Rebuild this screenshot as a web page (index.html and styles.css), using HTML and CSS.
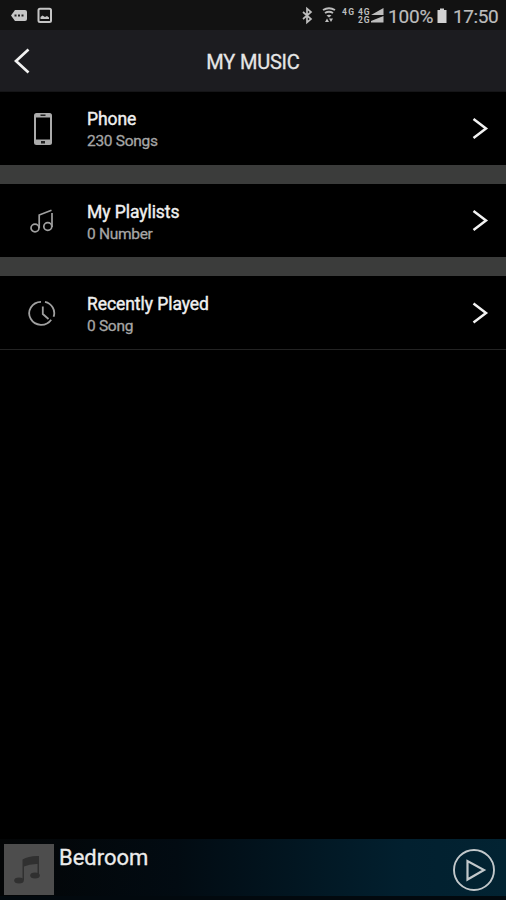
FILE: index.html
```html
<!DOCTYPE html>
<html lang="en">
<head>
<meta charset="utf-8">
<title>My Music</title>
<link rel="stylesheet" href="styles.css">
</head>
<body>
<div class="screen">
  <div class="status">
    <svg class="status-left" width="60" height="30" viewBox="0 0 60 30">
      <path d="M15 10h10q2 0 2 2v7q0 2-2 2H15l-4-5.500z" fill="#c6c6c6"/>
      <path d="M14.500 14.500h2v2h-2zM18 14.500h2v2h-2zM21.500 14.500h2v2h-2z" fill="#222"/>
      <rect x="38.500" y="8.800" width="12.500" height="13.200" rx="1.500" fill="none" stroke="#c6c6c6" stroke-width="2"/>
      <path d="M40.500 19v-2l2-1.500 2.500 1.500 2-1 2 1.500V19z" fill="#c6c6c6"/>
    </svg>
    <div class="status-right">
      <svg class="radios" width="84" height="30" viewBox="0 0 84 30">
        <path d="M3 12l8 7-4 3.500V8.500l4 3.500-8 7" fill="none" stroke="#bdbdbd" stroke-width="1.700"/>
        <path d="M23 10q6-3.500 12 0M25 13q4-2.500 8 0" fill="none" stroke="#bdbdbd" stroke-width="2"/>
        <path d="M26.500 15.500q2.500-1.500 5 0L29 17.500z" fill="#bdbdbd"/>
        <path d="M25 22l2-3.500 2 3.500zM29 18.500l2 3.500 2-3.500z" fill="#bdbdbd"/>
        <text class="net" x="42" y="15" textLength="12">4G</text>
        <text class="net" x="58" y="14.500" textLength="11.500">4G</text>
        <text class="net" x="58" y="23" textLength="11.500">2G</text>
        <path d="M71 15L83.500 8v7zM71 22.500v-1.500L83.500 16v6.500z" fill="#bdbdbd"/>
      </svg>
      <span class="percent">100%</span>
      <svg class="battery" width="12" height="30" viewBox="0 0 12 30">
        <path d="M4 8.500h4v1.500h2.500V23h-9V10H4z" fill="#d2d2d2"/>
      </svg>
      <span class="clock">17:50</span>
    </div>
  </div>
  <header class="header">
    <svg class="back" width="20" height="30" viewBox="0 0 20 30"><path d="M16.500 3.500L4 15l12.500 11.500" fill="none" stroke="#f2f2f2" stroke-width="2.700"/></svg>
    <h1 class="title">MY MUSIC</h1>
  </header>
  <main class="list">
    <div class="row">
      <svg class="icon" width="30" height="36" viewBox="0 0 30 36">
        <rect x="6" y="2" width="18" height="32" rx="2.500" fill="#ababab"/>
        <path d="M8 6.500h14v22H8z" fill="#000"/>
        <path d="M12.500 3.500h5v1.500h-5zM13 30h4v2.500h-4z" fill="#222"/>
      </svg>
      <div class="labels"><div class="name">Phone</div><div class="count">230 Songs</div></div>
      <svg class="chevron" width="20" height="26" viewBox="0 0 20 26"><path d="M2.500 3l12.500 9.500L2.500 22" fill="none" stroke="#f2f2f2" stroke-width="2.500"/></svg>
    </div>
    <div class="row">
      <svg class="icon" width="30" height="36" viewBox="0 0 30 36">
        <g fill="none" stroke="#a0a0a0" stroke-width="1.700"><ellipse cx="7" cy="25" rx="4" ry="3.800"/><ellipse cx="19.800" cy="23.500" rx="4" ry="3.800"/><path d="M11.200 25V12L23.500 7.200M24 10v14"/></g>
      </svg>
      <div class="labels low"><div class="name">My Playlists</div><div class="count">0 Number</div></div>
      <svg class="chevron" width="20" height="26" viewBox="0 0 20 26"><path d="M2.500 3l12.500 9.500L2.500 22" fill="none" stroke="#f2f2f2" stroke-width="2.500"/></svg>
    </div>
    <div class="row last">
      <svg class="icon" width="30" height="36" viewBox="0 0 30 36">
        <g fill="none" stroke="#a0a0a0" stroke-width="1.800"><path d="M17 6.800A12 11.500 0 0 1 25.600 21.700M23.200 24.700A12 11.500 0 1 1 13 6.800"/><path d="M14.800 11.500v7.500l5.700 5"/></g>
      </svg>
      <div class="labels low"><div class="name">Recently Played</div><div class="count">0 Song</div></div>
      <svg class="chevron" width="20" height="26" viewBox="0 0 20 26"><path d="M2.500 3.500l12.500 9.500L2.500 22.500" fill="none" stroke="#f2f2f2" stroke-width="2.500"/></svg>
    </div>
  </main>
  <footer class="player">
    <svg class="cover" width="50" height="51" viewBox="0 0 50 51">
      <path d="M0 0h50v51H0z" fill="#4d4d4d"/>
      <path d="M18.500 15.500Q25 11.500 35 12v8Q26 19.500 20 22.500V36h-1.500z" fill="#303030"/>
      <path d="M33.500 19H35v12h-1.500z" fill="#303030"/>
      <ellipse cx="15" cy="36.500" rx="4.800" ry="3" fill="#303030"/><ellipse cx="31" cy="31.500" rx="4.800" ry="3" fill="#303030"/>
    </svg>
    <div class="room">Bedroom</div>
    <svg class="play" width="44" height="44" viewBox="0 0 44 44">
      <g fill="none" stroke="#c2c8cb"><circle cx="22" cy="22" r="20" stroke-width="1.900"/><path d="M15.500 13v18.500L32 22z" stroke-width="2.200"/></g>
    </svg>
  </footer>
</div>
</body>
</html>
```
FILE: styles.css
```css
* { box-sizing: border-box; }
body { margin: 0; background: #000; font-family: Roboto, sans-serif; }
.screen { width: 506px; height: 900px; display: flex; flex-direction: column; background: #000; overflow: hidden; }
svg { display: block; flex: none; }
.status { height: 30px; flex: none; display: flex; justify-content: space-between; background: #121212; color: #bdbdbd; }
.status-right { display: flex; width: 206px; line-height: 33px; white-space: nowrap; }
.net { font-size: 8.500px; font-weight: 700; fill: #bdbdbd; }
.percent { width: 46px; padding-left: 4px; font-size: 19px; letter-spacing: -0.200px; -webkit-text-stroke: 0.200px #bdbdbd; }
.battery { margin-left: 6px; }
.clock { margin-left: 5px; font-size: 19px; letter-spacing: -0.400px; -webkit-text-stroke: 0.200px #bdbdbd; }
.header { height: 62px; flex: none; display: grid; grid-template-columns: 46px 1fr 46px; align-items: center; background: #1c1c20; border-bottom: 1px solid #151517; }
.back { margin-left: 12px; }
.title { margin: 2px 0 0; text-align: center; color: #e6e6e6; font-size: 20px; font-weight: 400; letter-spacing: -0.200px; -webkit-text-stroke: 0.300px #e6e6e6; }
.list { flex: 1; }
.row { height: 92px; display: flex; border-bottom: 19px solid #3b3c3b; }
.last { height: 74px; border-bottom: 1px solid #232323; }
.icon { margin: 19px 0 0 28px; }
.labels { flex: 1; margin-left: 29px; padding-top: 16px; white-space: nowrap; }
.low { padding-top: 17px; }
.name { height: 22px; line-height: 22px; font-size: 17.500px; letter-spacing: -0.060px; color: #f0f0f0; -webkit-text-stroke: 0.400px #f0f0f0; }
.count { height: 22px; line-height: 22px; font-size: 15.500px; letter-spacing: -0.300px; color: #a6a6a6; -webkit-text-stroke: 0.300px #a6a6a6; }
.chevron { margin: 24px 15px 0 0; }
.player { height: 61px; flex: none; display: flex; background: linear-gradient(90deg, #030506 0%, #020b12 35%, #02202f 80%, #022332 100%); border-bottom: 4px solid #02090e; }
.cover { margin: 5px 0 0 4px; }
.room { flex: 1; padding: 5px 0 0 5px; line-height: 27px; font-size: 22px; color: #ececec; -webkit-text-stroke: 0.300px #ececec; }
.play { margin: 9px 10px 0 0; }
```
